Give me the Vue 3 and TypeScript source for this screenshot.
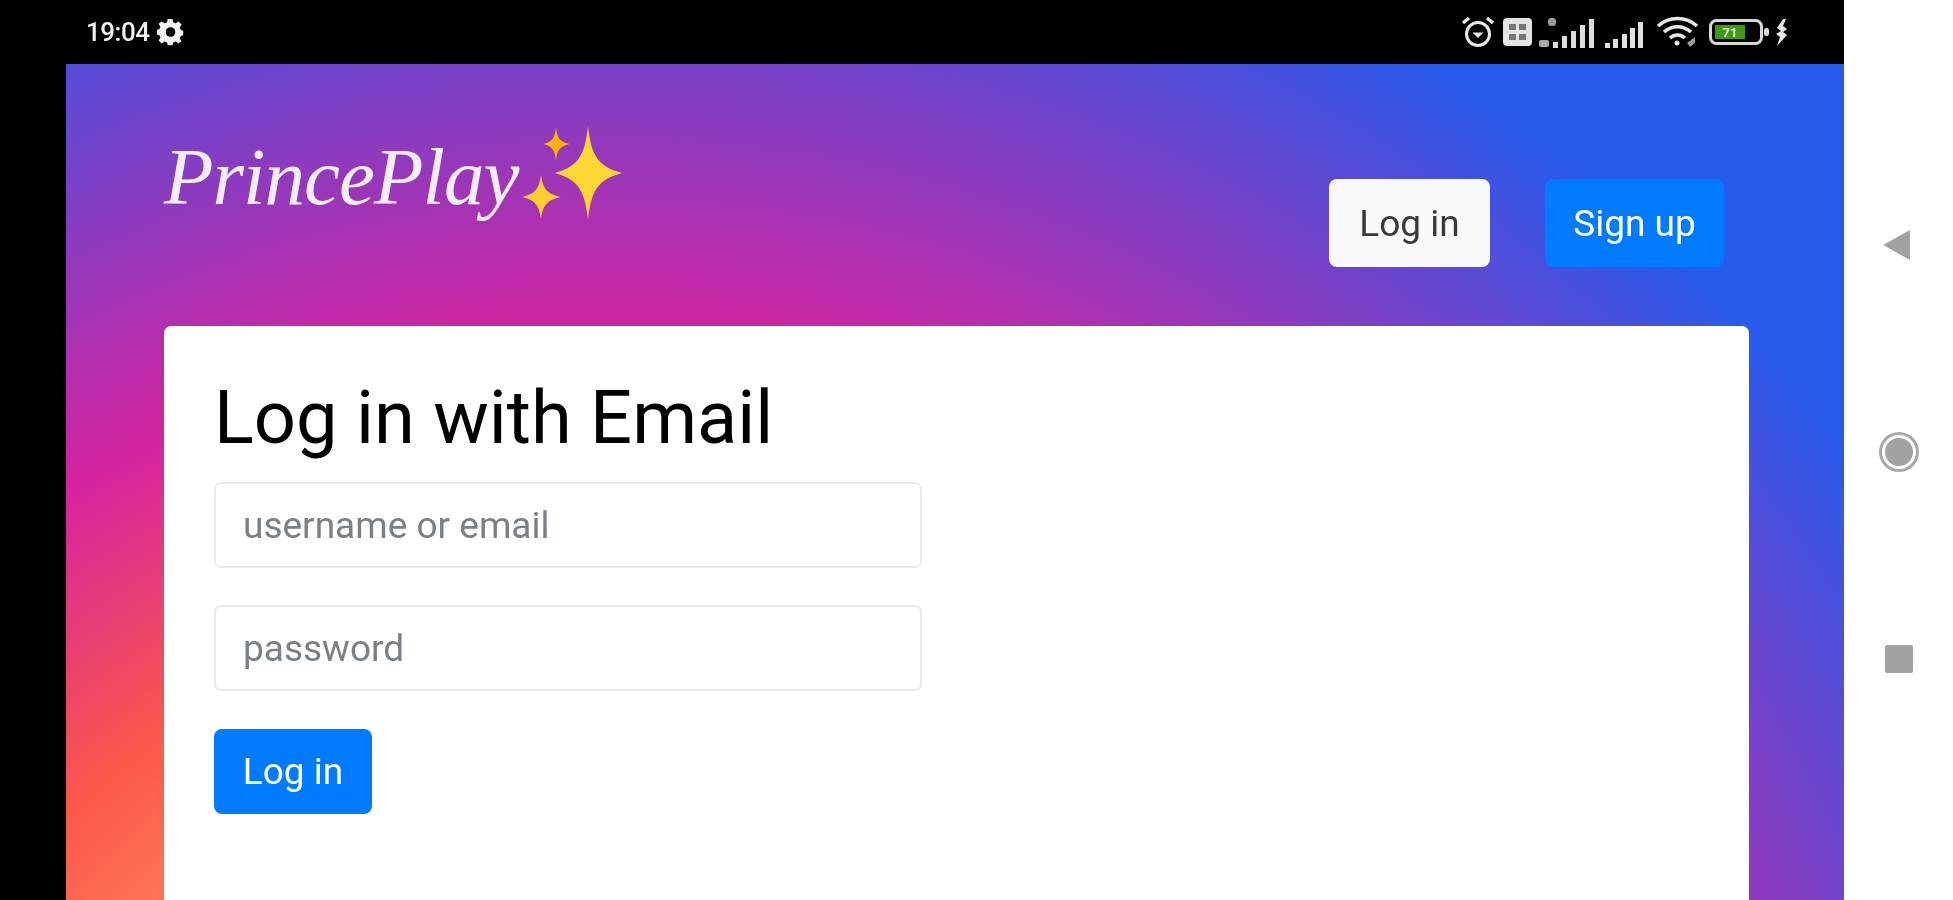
<template>
  <div class="device">
    <div class="screen">
      <div class="status-bar">
        <div class="status-left">
          <span class="clock">19:04</span>
          <svg class="gear" viewBox="0 0 28 28">
            <path d="M11.500 1h5l.8 3.600 2.600 1.100L23 3.700 26.300 7l-2 3.100 1.100 2.600 2.600.8v4.900l-2.600.8-1.100 2.600 2 3.100L23 27.300 19.900 25l-2.600 1.100-.8 2.900h-5l-.8-2.900L8.100 25 5 27.300 1.700 24l2-3.100-1.100-2.600-2.600-.8v-4.900l2.600-.8 1.100-2.600-2-3.100L5 3.700l3.100 2 2.600-1.100z" transform="translate(0 -1) scale(.97)" fill="#f2f2f2" />
            <circle cx="14" cy="13.500" r="5" fill="#000" />
          </svg>
        </div>
        <div class="status-right">
          <svg class="ic-alarm" viewBox="0 0 34 34" fill="none" stroke="#e8e8e8">
            <circle cx="17" cy="19" r="11.500" stroke-width="3" />
            <path d="M2 8l6-5M32 8l-6-5" stroke-width="3.500" />
            <path d="M11.500 17.500h11L17 23z" fill="#e8e8e8" stroke="none" />
          </svg>
          <svg class="ic-sim" viewBox="0 0 29 28">
            <rect width="29" height="28" rx="4" fill="#e4e4e4" />
            <rect x="6" y="6" width="7" height="6" fill="#777" />
            <rect x="16" y="6" width="7" height="6" fill="#777" />
            <rect x="6" y="16" width="7" height="6" fill="#777" />
            <rect x="16" y="16" width="7" height="6" fill="#777" />
          </svg>
          <svg class="ic-signal-a" viewBox="0 0 56 31" fill="#dcdcdc">
            <rect x="9" y="1" width="8" height="8" rx="3" fill="#9a9a9a" />
            <rect x="0" y="23" width="10" height="7" rx="2" fill="#aaa" />
            <rect x="14" y="25" width="5" height="6" />
            <rect x="23" y="19" width="5" height="12" />
            <rect x="32" y="14" width="5" height="17" />
            <rect x="41" y="8" width="5" height="23" />
            <rect x="50" y="2" width="5" height="29" />
          </svg>
          <svg class="ic-signal-b" viewBox="0 0 39 26" fill="#e0e0e0">
            <rect x="0" y="21" width="5" height="5" />
            <rect x="8" y="17" width="5" height="9" />
            <rect x="17" y="12" width="5" height="14" />
            <rect x="25" y="6" width="5" height="20" />
            <rect x="33" y="0" width="5" height="26" />
          </svg>
          <svg class="ic-wifi" viewBox="0 0 43 32" fill="none" stroke="#e8e8e8" stroke-width="3.500">
            <path d="M2 10c11-10 28-10 39 0" />
            <path d="M8 16c8-7 19-7 27 0" />
            <path d="M14 22c4.500-4 10.500-4 15 0" />
            <circle cx="21" cy="27" r="2.500" fill="#e8e8e8" stroke="none" />
            <path d="M31 27l8-6v6l-5 4z" fill="#999" stroke="none" />
          </svg>
          <svg class="ic-battery" viewBox="0 0 61 26">
            <rect x="1.500" y="1.500" width="51" height="23" rx="6" fill="none" stroke="#d8d8d8" stroke-width="3" />
            <rect x="6" y="6" width="30" height="14" fill="#3f9c12" />
            <rect x="55" y="9" width="5" height="8" rx="2" fill="#d8d8d8" />
            <text x="21" y="18" class="battery-level">71</text>
          </svg>
          <svg class="ic-bolt" viewBox="0 0 15 27">
            <path d="M9 0L3 9l4 3-5 3 4 3-3 9 10-11-4-3 4-3-4-3 3-7z" fill="#e4e4e4" />
          </svg>
        </div>
      </div>

      <main class="page">
        <header class="topbar">
          <div class="logo">
            <span class="logo-text">PrincePlay</span>
            <svg class="sparkles" viewBox="0 0 100 95">
              <path d="M66 0c3 27 8 40 34 47-26 7-31 20-34 47-3-27-8-40-33-47 25-7 30-20 33-47z" fill="#fdd835" />
              <path d="M34 1c1 11 4 15 14 17-10 2-13 6-14 17-1-11-4-15-13-17 9-2 12-6 13-17z" fill="#ffb300" />
              <path d="M19 49c2 14 6 19 20 22-14 3-18 8-20 22-2-14-6-19-19-22 13-3 17-8 19-22z" fill="#fdd030" />
            </svg>
          </div>
          <nav class="top-actions">
            <button class="btn btn-light">Log in</button>
            <button class="btn btn-primary">Sign up</button>
          </nav>
        </header>

        <section class="card">
          <h2 class="title">Log in with Email</h2>
          <form class="login-form" @submit.prevent>
            <input class="field" type="text" placeholder="username or email" />
            <input class="field" type="password" placeholder="password" />
            <button class="btn btn-primary btn-submit">Log in</button>
          </form>
        </section>
      </main>
    </div>

    <aside class="nav-bar">
      <div class="nav-slot">
        <svg class="nav-back" viewBox="0 0 27 30"><path d="M0 15L27 0v30z" fill="#a2a2a2" /></svg>
      </div>
      <div class="nav-slot">
        <div class="nav-home"></div>
      </div>
      <div class="nav-slot">
        <div class="nav-recent"></div>
      </div>
    </aside>
  </div>
</template>

<script setup lang="ts">
</script>

<style>
html,
body {
  margin: 0;
  overflow: hidden;
}
</style>

<style scoped>
.device {
  display: flex;
  width: 1953px;
  height: 900px;
  overflow: hidden;
  background: #000;
  font-family: Roboto, "Liberation Sans", sans-serif;
  filter: blur(0.7px);
}

.screen {
  flex: 1;
  min-width: 0;
  display: flex;
  flex-direction: column;
}

.status-bar {
  height: 64px;
  flex: none;
  display: flex;
  justify-content: space-between;
  align-items: center;
  padding: 0 55px 0 86px;
}

.status-left {
  display: flex;
  align-items: center;
  gap: 8px;
}

.clock {
  color: #f0f0f0;
  font-size: 26px;
  font-weight: 500;
  letter-spacing: -0.5px;
}

.gear {
  width: 27px;
  height: 27px;
}

.status-right {
  display: flex;
  align-items: center;
}

.ic-alarm {
  width: 34px;
  height: 34px;
  margin-right: 8px;
}

.ic-sim {
  width: 29px;
  height: 28px;
  margin-right: 7px;
}

.ic-signal-a {
  width: 56px;
  height: 31px;
  margin-right: 10px;
}

.ic-signal-b {
  width: 39px;
  height: 26px;
  margin-right: 12px;
  margin-top: 5px;
}

.ic-wifi {
  width: 43px;
  height: 32px;
  margin-right: 10px;
}

.ic-battery {
  width: 61px;
  height: 26px;
  margin-right: 4px;
}

.battery-level {
  fill: #e8f5d8;
  font-size: 13px;
  font-weight: 700;
  text-anchor: middle;
}

.ic-bolt {
  width: 15px;
  height: 27px;
}

.page {
  flex: 1;
  min-height: 0;
  margin-left: 66px;
  padding: 0 95px 0 98px;
  overflow: hidden;
  background: radial-gradient(
    circle 1720px at 542px 1310px,
    #fdf497 0%,
    #fdf497 5%,
    #fd5949 45%,
    #d6249f 60%,
    #285aeb 90%
  );
}

.topbar {
  height: 262px;
  display: flex;
  justify-content: space-between;
  align-items: flex-start;
  padding-right: 25px;
}

.logo {
  display: flex;
  align-items: flex-start;
  margin-top: 62px;
}

.logo-text {
  width: 358px;
  padding-top: 4px;
  color: #f4eefa;
  font-family: "Liberation Serif", serif;
  font-style: italic;
  font-size: 81px;
  line-height: 94px;
  letter-spacing: -1px;
}

.sparkles {
  width: 100px;
  height: 95px;
}

.top-actions {
  display: flex;
  gap: 55px;
  margin-top: 115px;
}

.btn {
  height: 88px;
  border: none;
  border-radius: 8px;
  font-family: inherit;
  font-size: 37px;
  padding: 0;
  white-space: nowrap;
}

.btn-light {
  background: #f8f9fa;
  color: #343a40;
  width: 161px;
}

.btn-primary {
  background: #007bff;
  color: #fff;
  width: 179px;
}

.card {
  height: 600px;
  box-sizing: border-box;
  padding: 0 50px;
  background: #fff;
  border-radius: 7px 7px 0 0;
}

.title {
  margin: 0;
  padding-top: 48px;
  height: 156px;
  box-sizing: border-box;
  color: #000;
  font-size: 74px;
  font-weight: 400;
  line-height: 88px;
}

.login-form {
  width: 708px;
  display: flex;
  flex-direction: column;
  align-items: flex-start;
  gap: 37px;
}

.field {
  width: 100%;
  height: 86px;
  box-sizing: border-box;
  padding: 0 27px;
  border: 2px solid #e8eaec;
  border-radius: 7px;
  font-family: inherit;
  font-size: 37px;
  outline: none;
}

.field::placeholder {
  color: #7a8087;
  opacity: 1;
}

.btn-submit {
  width: 158px;
  height: 85px;
  margin-top: 1px;
}

.nav-bar {
  width: 109px;
  flex: none;
  box-sizing: border-box;
  padding-top: 141px;
  background: #fff;
}

.nav-slot {
  height: 207px;
  display: flex;
  align-items: center;
  justify-content: center;
}

.nav-back {
  width: 27px;
  height: 30px;
  margin-right: 4px;
}

.nav-home {
  width: 28px;
  height: 28px;
  border: 3px solid #fff;
  border-radius: 50%;
  background: #a2a2a2;
  box-shadow: 0 0 0 3px #a8a8a8;
}

.nav-recent {
  width: 28px;
  height: 28px;
  border-radius: 2px;
  background: #a2a2a2;
}
</style>
